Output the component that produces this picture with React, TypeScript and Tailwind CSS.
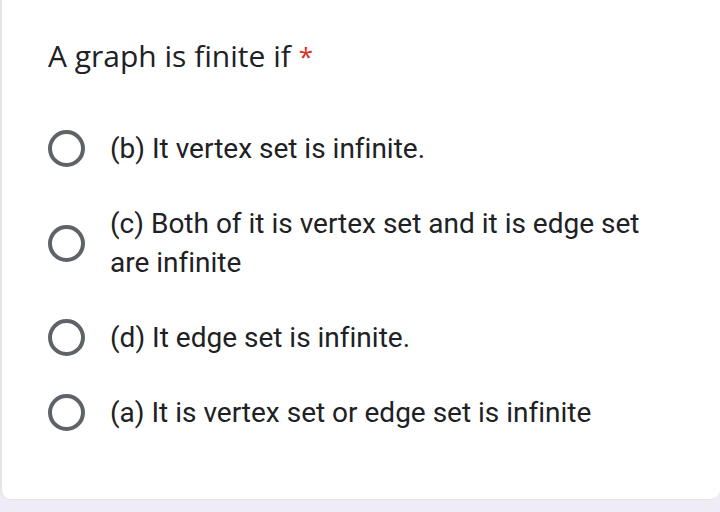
import React from "react";

// Single choice question card (Google Forms style)

const options = [
  "(b) It vertex set is infinite.",
  "(c) Both of it is vertex set and it is edge set are infinite",
  "(d) It edge set is infinite.",
  "(a) It is vertex set or edge set is infinite",
];

function Radio() {
  return (
    <span className="shrink-0 w-[37px] h-[37px] rounded-full border-[4px] border-[#5f6368]" />
  );
}

export default function App() {
  return (
    <div className="w-[720px] h-[512px] bg-[#efecf6] overflow-hidden">
      <div className="h-[500px] bg-white rounded-b-[10px] border-l-2 border-b border-[#e6e6ea] pl-[46px] pt-[36px]">
        <h2
          className="text-[30px] leading-[40px] text-[#202124]"
          style={{ fontFamily: '"Open Sans", "Noto Sans", sans-serif' }}
        >
          A graph is finite if <span className="text-[#d93025] text-[26px] align-top">*</span>
        </h2>

        <div
          className="mt-[53px] flex flex-col gap-[36px] text-[#202124] [font-variant-ligatures:none]"
          style={{ fontFamily: "Roboto, Arial, sans-serif" }}
        >
          {options.map((opt) => (
            <label key={opt} className="flex items-center gap-[25px]">
              <Radio />
              <span className="text-[28px] leading-[39px] w-[545px]">{opt}</span>
            </label>
          ))}
        </div>
      </div>
    </div>
  );
}
